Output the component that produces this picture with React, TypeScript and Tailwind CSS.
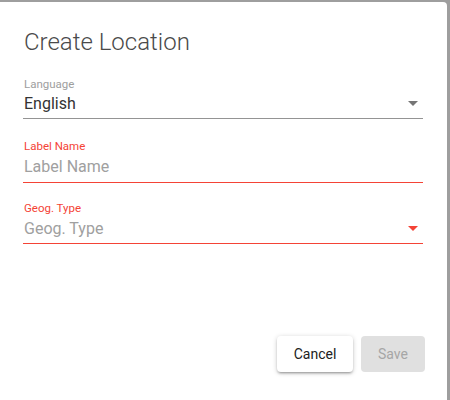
import React from 'react';

const Arrow = ({ color }: { color: string }) => (
  <svg width="10" height="5" viewBox="0 0 10 5" className="shrink-0">
    <path d="M0 0 L10 0 L5 5 Z" fill={color} />
  </svg>
);

export default function App() {
  return (
    <div className="w-[450px] h-[400px] bg-[#9e9e9e] overflow-hidden" style={{ fontFamily: 'Roboto, "Liberation Sans", sans-serif' }}>
      <div className="w-[447px] h-[398px] mt-[2px] bg-white rounded-tr-[4px] flex flex-col pl-[23px] pr-[22px] pt-[24px] pb-[28px]">
        <h2 className="text-[24px] leading-[32px] font-light text-[#4a4a4a] pl-[1px]">Create Location</h2>

        {/* Language */}
        <div className="w-[400px] mt-[19px] border-b border-[#949494]">
          <div className="text-[11.5px] leading-[14px] text-[#9e9e9e] pl-[1px]">Language</div>
          <div className="flex items-center justify-between mt-[3px] pb-[5px]">
            <span className="text-[16px] leading-[19px] text-[#333] pl-[1px]">English</span>
            <span className="mr-[5px]"><Arrow color="#757575" /></span>
          </div>
        </div>

        {/* Label Name */}
        <div className="w-[400px] mt-[20px] border-b border-[#f44336]">
          <div className="text-[11.5px] leading-[14px] text-[#f44336] pl-[1px]">Label Name</div>
          <div className="mt-[2px] pb-[3px]">
            <span className="text-[16px] leading-[19px] text-[#a0a0a0] pl-[1px]">Label Name</span>
          </div>
        </div>

        {/* Geog. Type */}
        <div className="w-[400px] mt-[18px] border-b border-[#f44336]">
          <div className="text-[11.5px] leading-[14px] text-[#f44336] pl-[1px]">Geog. Type</div>
          <div className="flex items-center justify-between mt-[4px] pb-[5px]">
            <span className="text-[16px] leading-[19px] text-[#a0a0a0] pl-[1px]">Geog. Type</span>
            <span className="mr-[5px]"><Arrow color="#f44336" /></span>
          </div>
        </div>

        <div className="mt-auto flex justify-end gap-[8px]">
          <button className="w-[76px] h-[36px] bg-white rounded-[4px] text-[14px] font-normal text-[#212121] shadow-[0_1px_5px_rgba(0,0,0,0.2),0_2px_2px_rgba(0,0,0,0.14),0_3px_1px_-2px_rgba(0,0,0,0.12)]">
            Cancel
          </button>
          <button className="w-[64px] h-[36px] bg-[#e0e0e0] rounded-[4px] text-[14px] font-normal text-[#a6a6a6]">
            Save
          </button>
        </div>
      </div>
    </div>
  );
}
